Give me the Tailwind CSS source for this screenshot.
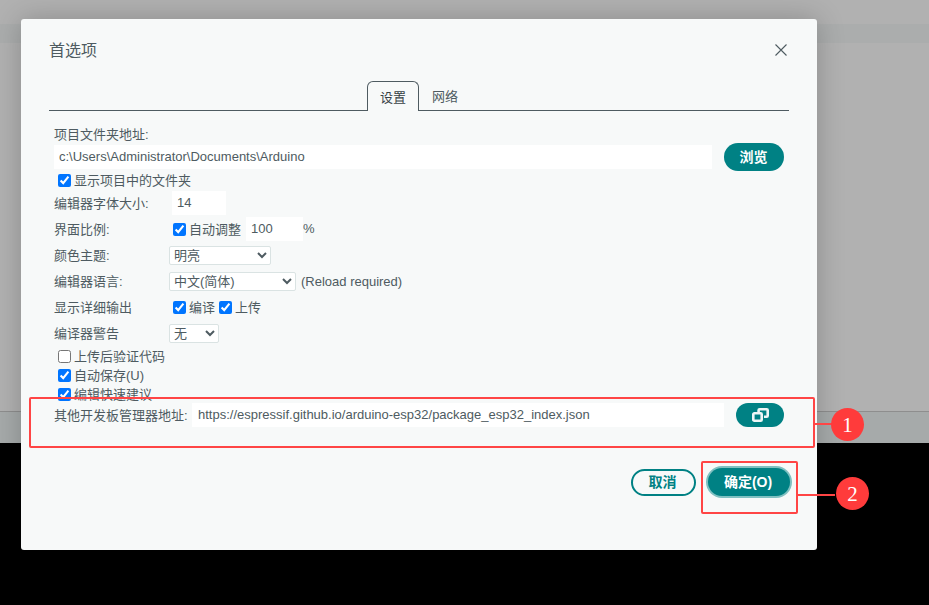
<!DOCTYPE html>
<html lang="zh">
<head>
<meta charset="utf-8">
<script src="https://cdn.jsdelivr.net/npm/@tailwindcss/browser@4"></script>
</head>
<body class="m-0 overflow-hidden bg-black">
<div class="relative w-[929px] h-[605px] overflow-hidden bg-black text-[13px] leading-[18px] text-[#4e5b61] font-['Liberation_Sans','Noto_Sans_CJK_SC',sans-serif]">
  <div class="flex flex-col h-[443px]">
    <div class="h-[24px] bg-[#b1b1b1]"></div>
    <div class="h-[19px] bg-[#abadad]"></div>
    <div class="h-[368px] bg-[#b1b1b1]"></div>
    <div class="h-[1px] bg-[#8e8e8e]"></div>
    <div class="h-[31px] bg-[#a6aaaa]"></div>
  </div>

  <div class="absolute left-[21px] top-[19px] w-[796px] h-[531px] bg-[#f7f9f9] rounded-[3px] shadow-[0_0_28px_rgba(0,0,0,0.22)]">
    <div class="flex items-start justify-between pl-[28px] pr-[30px] pt-[21px] h-[62px]">
      <div class="text-[16px] leading-[20px] pt-[1px]">首选项</div>
      <svg class="mt-[4px]" width="12" height="12" viewBox="0 0 12 12" fill="none" stroke="#4e5b61" stroke-width="1.1"><path d="M0.5 0.5 L11.5 11.5 M11.5 0.5 L0.5 11.5"/></svg>
    </div>

    <div class="flex items-end mx-[28px] h-[30px] border-b border-[#4e5b61]">
      <div class="ml-[318px] w-[52px] h-[30px] -mb-px flex items-center justify-center bg-[#f7f9f9] border border-b-0 border-[#4e5b61] rounded-t-[6px] text-[#374146] pt-[2px]">设置</div>
      <div class="w-[52px] h-[29px] flex items-center justify-center pt-[2px]">网络</div>
    </div>

    <div class="pl-[33px] pt-[14px]">
      <div class="h-[19px] flex items-center">项目文件夹地址:</div>
      <div class="flex items-center h-[26px]">
        <div class="w-[658px] h-[24px] bg-white pl-[5px] flex items-center">c:\Users\Administrator\Documents\Arduino</div>
        <div class="ml-[12px] w-[60px] h-[28px] rounded-full bg-[#008184] text-white text-[14px] font-bold flex items-center justify-center pr-[1px]">浏览</div>
      </div>
      <label class="flex items-center h-[21px] pl-[4px]"><input type="checkbox" checked class="m-0 mr-[3px] w-[13px] h-[13px]"><span>显示项目中的文件夹</span></label>

      <div class="flex items-center h-[26px] -mt-[1px]">
        <div class="w-[118px] pt-[2px]">编辑器字体大小:</div>
        <div class="w-[54px] h-[24px] bg-white pl-[5px] flex items-center">14</div>
      </div>
      <div class="flex items-center h-[26px]">
        <div class="w-[119px] pt-[2px]">界面比例:</div>
        <label class="flex items-center w-[73px]"><input type="checkbox" checked class="m-0 mr-[3px] w-[13px] h-[13px]"><span class="pt-[2px]">自动调整</span></label>
        <div class="w-[57px] h-[24px] bg-white pl-[5px] flex items-center">100</div>
        <div>%</div>
      </div>
      <div class="flex items-center h-[26px]">
        <div class="w-[115px] pt-[2px]">颜色主题:</div>
        <select class="w-[102px] h-[19px] mt-[1px] bg-white border border-[#dae3e3] rounded-[2px] text-[13px] leading-[17px] text-[#4e5b61] appearance-auto"><option>明亮</option></select>
      </div>
      <div class="flex items-center h-[26px]">
        <div class="w-[115px] pt-[2px]">编辑器语言:</div>
        <select class="w-[127px] h-[19px] mt-[1px] bg-white border border-[#dae3e3] rounded-[2px] text-[13px] leading-[17px] text-[#4e5b61] appearance-auto"><option>中文(简体)</option></select>
        <span class="ml-[5px] pt-[2px]">(Reload required)</span>
      </div>
      <div class="flex items-center h-[26px]">
        <div class="w-[119px] pt-[2px]">显示详细输出</div>
        <label class="flex items-center mr-[4px]"><input type="checkbox" checked class="m-0 mr-[3px] w-[13px] h-[13px]"><span class="pt-[2px]">编译</span></label>
        <label class="flex items-center"><input type="checkbox" checked class="m-0 mr-[3px] w-[13px] h-[13px]"><span class="pt-[2px]">上传</span></label>
      </div>
      <div class="flex items-center h-[26px]">
        <div class="w-[115px] pt-[2px]">编译器警告</div>
        <select class="w-[50px] h-[19px] mt-[1px] bg-white border border-[#dae3e3] rounded-[2px] text-[13px] leading-[17px] text-[#4e5b61] appearance-auto"><option>无</option></select>
      </div>
      <label class="flex items-center h-[19px] pl-[4px] mt-[1px]"><input type="checkbox" class="m-0 mr-[3px] w-[13px] h-[13px]"><span>上传后验证代码</span></label>
      <label class="flex items-center h-[19px] pl-[4px]"><input type="checkbox" checked class="m-0 mr-[3px] w-[13px] h-[13px]"><span>自动保存(U)</span></label>
      <label class="flex items-center h-[19px] pl-[4px]"><input type="checkbox" checked class="m-0 mr-[3px] w-[13px] h-[13px]"><span>编辑快速建议</span></label>
      <div class="flex items-center h-[24px] -mt-[1px]">
        <div class="w-[138px] pt-[2px]">其他开发板管理器地址:</div>
        <div class="w-[532px] h-[24px] bg-white pl-[6px] flex items-center">https://espressif.github.io/arduino-esp32/package_esp32_index.json</div>
        <div class="ml-[12px] w-[48px] h-[24px] rounded-full bg-[#008184] flex items-center justify-center">
          <svg width="17" height="14" viewBox="0 0 17 14" fill="none" stroke="#eef6f6" stroke-width="2.6"><rect x="1.3" y="5.3" width="8.4" height="7.4" rx="1"/><path d="M6.6 4V2.3a1 1 0 0 1 1-1h7.1a1 1 0 0 1 1 1v5.4a1 1 0 0 1-1 1H12"/></svg>
        </div>
      </div>
    </div>

    <div class="flex justify-end items-center gap-[12px] pr-[27px] mt-[41px]">
      <div class="w-[65px] h-[27px] rounded-full border-2 border-[#008184] text-[#008184] text-[14px] font-bold flex items-center justify-center pr-[2px]">取消</div>
      <div class="w-[82px] h-[28px] rounded-full bg-[#008184] ring-2 ring-[#7fc0c1] text-white text-[14px] font-bold flex items-center justify-center pr-[2px]">确定(O)</div>
    </div>
  </div>

  <div class="absolute left-[29px] top-[397px] w-[786px] h-[51px] border-2 border-[#ff4545] rounded-[2px]"></div>
  <div class="absolute left-[701px] top-[461px] w-[97px] h-[53px] border-2 border-[#ff4545] rounded-[2px]"></div>
  <div class="absolute left-[814px] top-[423px] w-[18px] h-[2px] bg-[#ff4545]"></div>
  <div class="absolute left-[797px] top-[494px] w-[38px] h-[2px] bg-[#ff4545]"></div>
  <div class="absolute left-[831px] top-[408px] w-[33px] h-[33px] rounded-full bg-[#ff3b3b] text-white flex items-center justify-center text-[21px] font-['Liberation_Serif',serif]">1</div>
  <div class="absolute left-[836px] top-[477px] w-[33px] h-[33px] rounded-full bg-[#ff3b3b] text-white flex items-center justify-center text-[21px] font-['Liberation_Serif',serif]">2</div>
</div>
</body>
</html>
